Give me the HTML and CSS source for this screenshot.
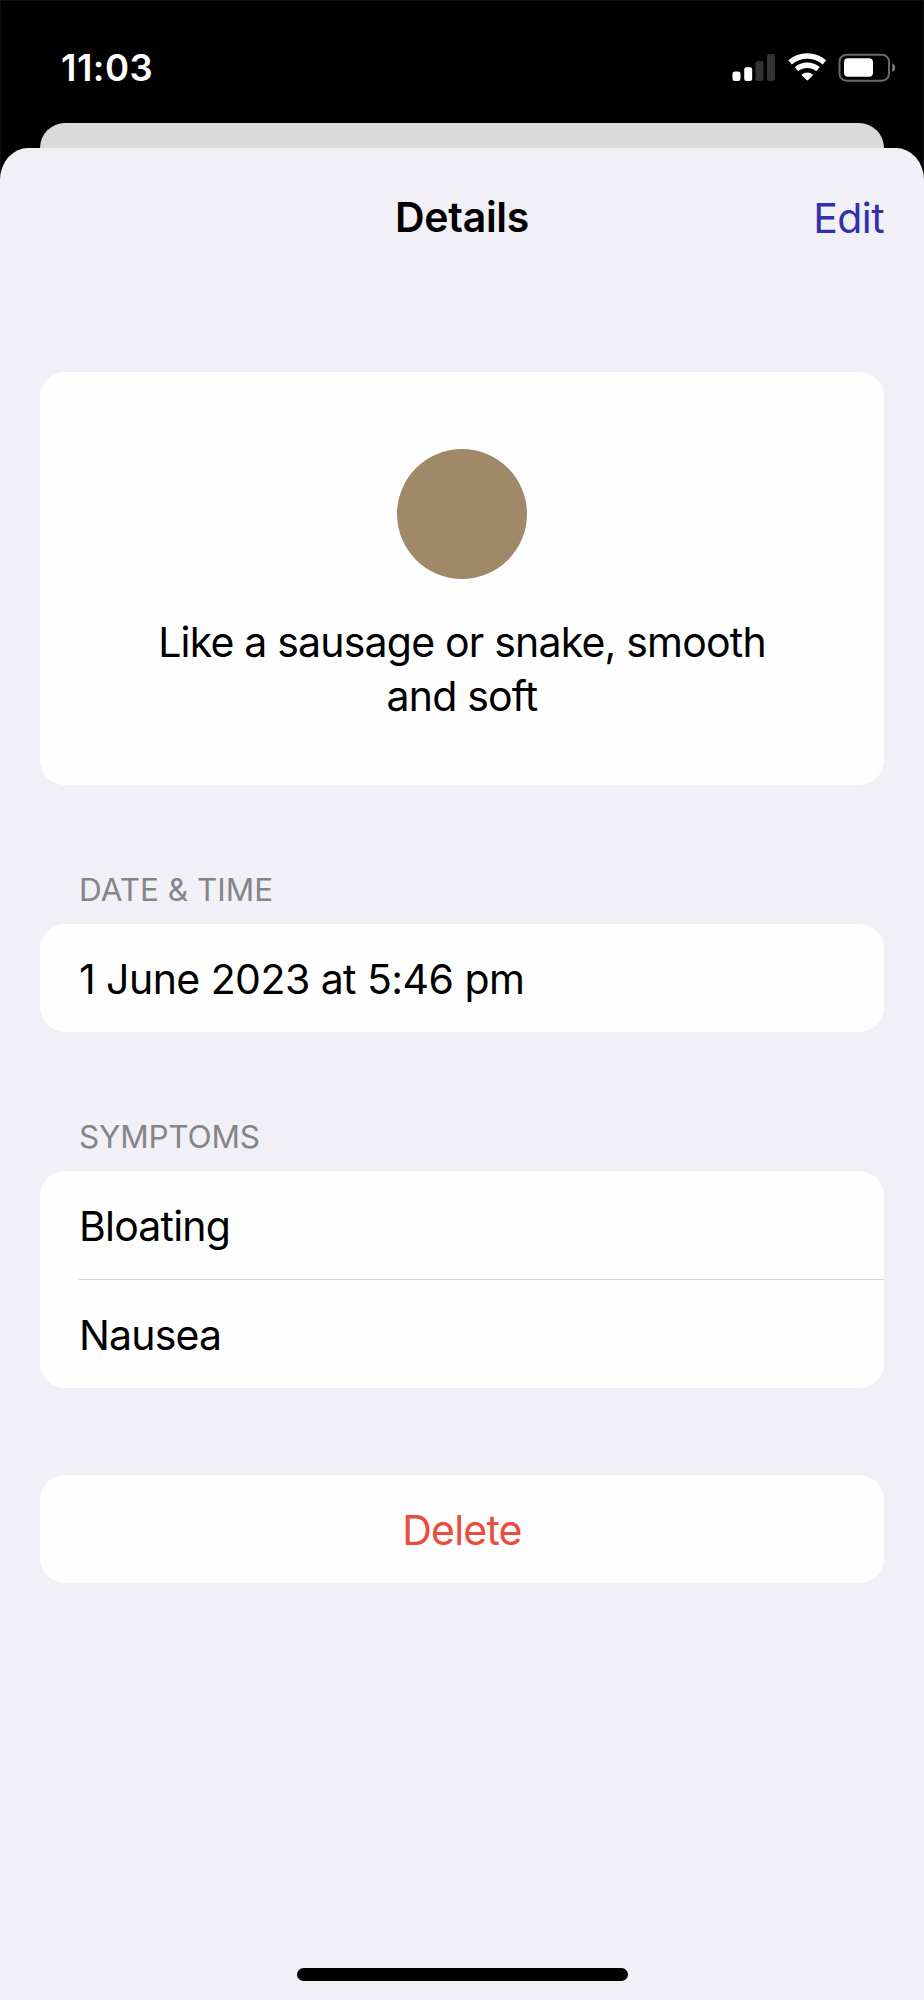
FILE: index.html
```html
<!DOCTYPE html>
<html lang="en">
<head>
<meta charset="utf-8">
<title>Details</title>
<link rel="stylesheet" href="styles.css">
</head>
<body>
<div class="screen">
  <header class="status">
    <span class="time">11:03</span>
    <svg class="status-icons" width="168" height="32" viewBox="0 0 168 32">
      <g fill="#fff">
        <rect x="2.500" y="19.500" width="8" height="9.500" rx="2.2"/>
        <rect x="14.2" y="15.300" width="8" height="13.700" rx="2.2"/>
        <rect x="25.500" y="9" width="8" height="20" rx="2.2" fill="#333"/>
        <rect x="37" y="2" width="8" height="27" rx="2.2" fill="#333"/>
      </g>
      <g fill="none" stroke="#fff" stroke-width="5.4">
        <path d="M60 10.4A26.3 26.3 0 0 1 94.500 10.4"/>
        <path d="M66.500 17.2A16.8 16.8 0 0 1 88 17.2"/>
      </g>
      <path d="M71.900 22.4a8.5 8.5 0 0 1 10.8 0q.6.5 0 1.1l-4.600 4.600q-.8.7-1.600 0l-4.600-4.600q-.6-.6 0-1.100z" fill="#fff"/>
      <rect x="109.500" y="2.700" width="49.500" height="26" rx="7" fill="none" stroke="#686868" stroke-width="2"/>
      <rect x="114" y="6.300" width="29" height="18.500" rx="4" fill="#fff"/>
      <path d="M162.200 11.500q3 1 3 4.200t-3 4.200z" fill="#777"/>
    </svg>
  </header>
  <div class="back-sheet"></div>
  <main class="sheet">
    <nav class="navbar">
      <h1 class="title">Details</h1>
      <a class="edit">Edit</a>
    </nav>
    <section class="card summary">
      <div class="dot"></div>
      <p class="description">Like a sausage or snake, smooth and soft</p>
    </section>
    <h2 class="label date-label">DATE &amp; TIME</h2>
    <section class="card"><div class="row date">1 June 2023 at 5:46 pm</div></section>
    <h2 class="label symptoms-label">SYMPTOMS</h2>
    <section class="card list">
      <div class="row bloating">Bloating</div>
      <div class="separator"></div>
      <div class="row nausea">Nausea</div>
    </section>
    <button class="card delete"><span class="row-text">Delete</span></button>
    <div class="home-indicator"></div>
  </main>
</div>
</body>
</html>
```
FILE: styles.css
```css
* { box-sizing: border-box; }
body { margin: 0; background: #000; }
.screen {
  width: 924px;
  height: 2000px;
  display: flex;
  flex-direction: column;
  overflow: hidden;
  background: #000;
  box-shadow: inset 0 0 0 1px #111;
  font-family: Inter, "Liberation Sans", sans-serif;
  font-size: 41px;
  letter-spacing: -0.8px;
  color: #000;
}
.status {
  height: 123px;
  flex: none;
  display: flex;
  justify-content: space-between;
  align-items: flex-start;
  padding: 52px 26px 0 61px;
}
.time {
  margin-top: 1px;
  font-size: 36.5px;
  line-height: 30px;
  font-weight: 600;
  letter-spacing: 0.5px;
  color: #fff;
}
.back-sheet {
  height: 60px;
  flex: none;
  margin: 0 40px -35px;
  border-radius: 25px 25px 0 0;
  background: #dadada;
}
.sheet {
  flex: 1;
  display: flex;
  flex-direction: column;
  padding: 0 40px;
  background: #f1f0f6;
  border-radius: 28px 28px 0 0 / 32px 32px 0 0;
}
.navbar {
  height: 138px;
  margin-bottom: 86px;
  flex: none;
  display: grid;
  grid-template-columns: 1fr auto 1fr;
  align-items: center;
}
.title {
  grid-column: 2;
  margin: 0;
  font-size: 41px;
  font-weight: 600;
  letter-spacing: -0.3px;
}
.edit {
  justify-self: end;
  padding-top: 1px;
  letter-spacing: -0.6px;
  color: #3231ab;
}
.card {
  flex: none;
  border: 0;
  border-radius: 25px;
  background: #fefefe;
}
.summary {
  height: 413px;
  display: flex;
  flex-direction: column;
  align-items: center;
  padding-top: 77px;
}
.dot {
  width: 130px;
  height: 130px;
  border-radius: 50%;
  background: #a08969;
}
.description {
  width: 640px;
  margin: 36px 0 0;
  line-height: 54px;
  text-align: center;
}
.label {
  margin: 73px 0 0 39px;
  height: 66px;
  line-height: 64px;
  font-size: 31.5px;
  font-weight: 400;
  letter-spacing: 0;
  color: #858489;
}
.symptoms-label { letter-spacing: -0.2px; }
.row {
  height: 108px;
  padding: 2px 0 0 39px;
  display: flex;
  align-items: center;
}
.date { letter-spacing: -0.55px; }
.separator {
  height: 1px;
  margin-left: 39px;
  background: #d5d5d7;
}
.delete {
  height: 108px;
  margin-top: 87px;
  padding: 2px 0 0;
  font: inherit;
  letter-spacing: inherit;
  color: #eb4d3d;
}
.home-indicator {
  align-self: center;
  width: 331px;
  height: 13px;
  margin-top: auto;
  margin-bottom: 19px;
  border-radius: 7px;
  background: #000;
}
```
